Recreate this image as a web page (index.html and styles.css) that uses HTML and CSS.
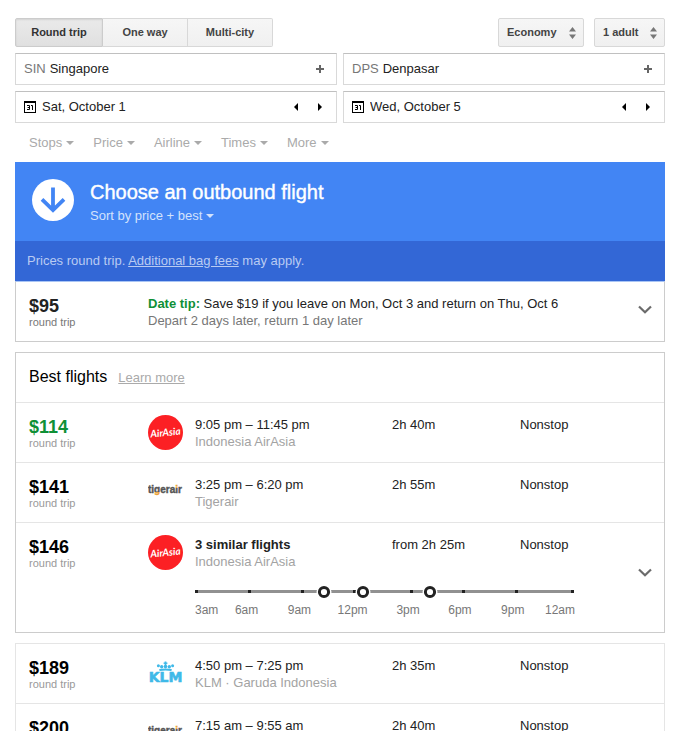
FILE: index.html
```html
<!DOCTYPE html>
<html lang="en">
<head>
  <meta charset="UTF-8" />
  <meta name="viewport" content="width=device-width, initial-scale=1" />
  <title>Flights from Singapore to Denpasar</title>
  <link rel="stylesheet" href="styles.css">
</head>
<body>
  <!-- Shared icons and the Tigerair colours -->
  <svg class="sprites" aria-hidden="true">
    <defs>
      <linearGradient id="tiger-g" gradientUnits="userSpaceOnUse" x1="0" y1="0" x2="0" y2="35">
        <stop offset="0.5" stop-color="#555" />
        <stop offset="0.5" stop-color="#e9a13b" />
      </linearGradient>
      <linearGradient id="tiger-i" gradientUnits="userSpaceOnUse" x1="0" y1="0" x2="0" y2="35">
        <stop offset="0.36" stop-color="#e9a13b" />
        <stop offset="0.36" stop-color="#555" />
      </linearGradient>
    </defs>
    <symbol id="chevron" viewBox="0 0 14 9">
      <path d="M1 1.5L7 7.3L13 1.5" fill="none" stroke="#6b6b6b" stroke-width="2.2" />
    </symbol>
    <symbol id="calendar" viewBox="0 0 12 12">
      <path d="M0 0H12V12H0ZM1 2V11H11V2Z" fill="#000" fill-rule="evenodd" />
      <path d="M3 4.5H5.5V8.5H3M3.6 6.5H5.5M7 4.5H8.5V9" fill="none" stroke="#000" />
    </symbol>
    <symbol id="updown" viewBox="0 0 7 12">
      <path d="M0 4.5L3.5 0L7 4.5ZM0 7.5L3.5 12L7 7.5Z" fill="#777" />
    </symbol>
    <symbol id="plus" viewBox="0 0 8 8">
      <path d="M4 0V8M0 4H8" stroke="#666" stroke-width="2" />
    </symbol>
  </svg>

  <main class="page">
    <!-- Search form -->
    <form class="search">
      <div class="toolbar">
        <div class="trip-types">
          <button type="button" class="trip-type selected">Round trip</button>
          <button type="button" class="trip-type">One way</button>
          <button type="button" class="trip-type">Multi-city</button>
        </div>
        <div class="options">
          <div class="dropdown cabin">
            <select aria-label="Cabin class">
              <option>Economy</option>
              <option>Business</option>
            </select>
            <svg><use href="#updown" /></svg>
          </div>
          <div class="dropdown passengers">
            <select aria-label="Passengers">
              <option>1 adult</option>
              <option>2 adults</option>
            </select>
            <svg><use href="#updown" /></svg>
          </div>
        </div>
      </div>

      <div class="fields">
        <div class="field">
          <label for="from">SIN</label>
          <input type="text" id="from" value="Singapore" />
          <button type="button" class="field-btn" aria-label="Add origin"><svg class="plus"><use href="#plus" /></svg></button>
        </div>
        <div class="field">
          <label for="to">DPS</label>
          <input type="text" id="to" value="Denpasar" />
          <button type="button" class="field-btn" aria-label="Add destination"><svg class="plus"><use href="#plus" /></svg></button>
        </div>
        <div class="field date">
          <label for="depart" aria-label="Departure date"><svg class="calendar"><use href="#calendar" /></svg></label>
          <input type="text" id="depart" value="Sat, October 1" />
          <button type="button" class="field-btn" aria-label="Previous day"><span class="arrow-left"></span></button>
          <button type="button" class="field-btn" aria-label="Next day"><span class="arrow-right"></span></button>
        </div>
        <div class="field date">
          <label for="return" aria-label="Return date"><svg class="calendar"><use href="#calendar" /></svg></label>
          <input type="text" id="return" value="Wed, October 5" />
          <button type="button" class="field-btn" aria-label="Previous day"><span class="arrow-left"></span></button>
          <button type="button" class="field-btn" aria-label="Next day"><span class="arrow-right"></span></button>
        </div>
      </div>

      <div class="filters">
        <button type="button" class="menu-btn">Stops</button>
        <button type="button" class="menu-btn">Price</button>
        <button type="button" class="menu-btn">Airline</button>
        <button type="button" class="menu-btn">Times</button>
        <button type="button" class="menu-btn">More</button>
      </div>
    </form>

    <!-- Blue heading -->
    <header class="banner">
      <svg class="banner-icon" viewBox="0 0 42 42" aria-hidden="true">
        <circle cx="21" cy="21" r="21" fill="#fff" />
        <path d="M21 8.5V31M10 20.3L21 31L32 20.3" fill="none" stroke="#4285f4" stroke-width="3.8" />
      </svg>
      <div>
        <h1>Choose an outbound flight</h1>
        <button type="button" class="menu-btn sort">Sort by price + best</button>
      </div>
    </header>
    <p class="notice">Prices round trip. <a href="#">Additional bag fees</a> may apply.</p>

    <!-- Date tip -->
    <section class="card tip">
      <div class="row">
        <div class="price"><strong>$95</strong><span>round trip</span></div>
        <div class="tip-text">
          <div><b>Date tip:</b> Save $19 if you leave on Mon, Oct 3 and return on Thu, Oct 6</div>
          <div class="sub">Depart 2 days later, return 1 day later</div>
        </div>
        <button type="button" class="expand" aria-label="Show details"><svg><use href="#chevron" /></svg></button>
      </div>
    </section>

    <!-- Best flights -->
    <section class="card best">
      <div class="card-title">
        <h2>Best flights</h2>
        <a href="#">Learn more</a>
      </div>
      <div class="row">
        <div class="price cheap"><strong>$114</strong><span>round trip</span></div>
        <svg class="logo" viewBox="0 0 35 35" role="img" aria-label="AirAsia">
          <circle cx="17.5" cy="17.5" r="17.5" fill="#fc2024" />
          <text class="airasia-text" x="17.5" y="21" text-anchor="middle" transform="rotate(-6 17.5 17.5)">AirAsia</text>
        </svg>
        <div class="info"><div>9:05 pm – 11:45 pm</div><div class="sub">Indonesia AirAsia</div></div>
        <div class="info">2h 40m</div>
        <div class="info">Nonstop</div>
      </div>
      <div class="row">
        <div class="price"><strong>$141</strong><span>round trip</span></div>
        <svg class="logo" viewBox="0 0 35 35" role="img" aria-label="Tigerair">
          <text class="tiger-text" x="0" y="18">ti<tspan class="tiger-g">g</tspan>era<tspan class="tiger-i">i</tspan>r</text>
        </svg>
        <div class="info"><div>3:25 pm – 6:20 pm</div><div class="sub">Tigerair</div></div>
        <div class="info">2h 55m</div>
        <div class="info">Nonstop</div>
      </div>
      <div class="row">
        <div class="price"><strong>$146</strong><span>round trip</span></div>
        <svg class="logo" viewBox="0 0 35 35" role="img" aria-label="AirAsia">
          <circle cx="17.5" cy="17.5" r="17.5" fill="#fc2024" />
          <text class="airasia-text" x="17.5" y="21" text-anchor="middle" transform="rotate(-6 17.5 17.5)">AirAsia</text>
        </svg>
        <div class="info"><div><b>3 similar flights</b></div><div class="sub">Indonesia AirAsia</div></div>
        <div class="info">from 2h 25m</div>
        <div class="info">Nonstop</div>
        <button type="button" class="expand" aria-label="Show similar flights"><svg><use href="#chevron" /></svg></button>
        <div class="timeline">
          <svg viewBox="0 0 380 14" aria-hidden="true">
            <path d="M0 6.5H379" stroke="#919191" stroke-width="3" />
            <path d="M0 6.5h3M53 6.5h3M106 6.5h3M158 6.5h3M215 6.5h3M267 6.5h3M320 6.5h3M376 6.5h3" stroke="#222" stroke-width="3" />
            <g fill="#fff" stroke="#fff" stroke-width="5">
              <circle cx="129" cy="7" r="5" />
              <circle cx="168" cy="7" r="5" />
              <circle cx="235" cy="7" r="5" />
            </g>
            <g fill="#fff" stroke="#222" stroke-width="3">
              <circle cx="129" cy="7" r="4.6" />
              <circle cx="168" cy="7" r="4.6" />
              <circle cx="235" cy="7" r="4.6" />
            </g>
          </svg>
          <div class="hours">
            <span>3am</span><span>6am</span><span>9am</span><span>12pm</span>
            <span>3pm</span><span>6pm</span><span>9pm</span><span>12am</span>
          </div>
        </div>
      </div>
    </section>

    <!-- Other flights -->
    <section class="card others">
      <div class="row">
        <div class="price"><strong>$189</strong><span>round trip</span></div>
        <svg class="logo" viewBox="0 0 35 35" role="img" aria-label="KLM">
          <g fill="#3fb9e8">
            <rect x="16.6" y="5.5" width="1.8" height="4" />
            <rect x="15.6" y="6.5" width="3.8" height="1.4" />
            <circle cx="17.5" cy="10.6" r="1.8" />
            <circle cx="13.7" cy="10.8" r="1.7" />
            <circle cx="21.3" cy="10.8" r="1.7" />
            <circle cx="10.4" cy="9.8" r="1.5" />
            <circle cx="24.6" cy="9.8" r="1.5" />
            <path d="M11.2 13Q17.5 12 23.8 13L23.4 15Q17.5 14.2 11.6 15Z" />
            <text class="klm-text" x="17.5" y="26" text-anchor="middle">KLM</text>
          </g>
        </svg>
        <div class="info"><div>4:50 pm – 7:25 pm</div><div class="sub">KLM · Garuda Indonesia</div></div>
        <div class="info">2h 35m</div>
        <div class="info">Nonstop</div>
      </div>
      <div class="row">
        <div class="price"><strong>$200</strong><span>round trip</span></div>
        <svg class="logo" viewBox="0 0 35 35" role="img" aria-label="Tigerair">
          <text class="tiger-text" x="0" y="18">ti<tspan class="tiger-g">g</tspan>era<tspan class="tiger-i">i</tspan>r</text>
        </svg>
        <div class="info"><div>7:15 am – 9:55 am</div><div class="sub">Tigerair</div></div>
        <div class="info">2h 40m</div>
        <div class="info">Nonstop</div>
      </div>
    </section>
  </main>
</body>
</html>
```
FILE: styles.css
```css
* {
  box-sizing: border-box;
}

body {
  margin: 0;
  background: #fff;
  color: #222;
  font-family: "Liberation Sans", Arial, sans-serif;
  font-size: 13px;
  line-height: 17px;
}

button,
input,
select {
  margin: 0;
  padding: 0;
  border: none;
  background: none;
  color: inherit;
  font: inherit;
}

button {
  cursor: pointer;
}

h1,
h2,
p {
  margin: 0;
  font-weight: normal;
}

.sprites {
  position: absolute;
  width: 0;
  height: 0;
}

.page {
  padding: 18px 17px 0 15px;
}

/* Toolbar */
.toolbar {
  display: flex;
  justify-content: space-between;
  margin-bottom: 6px;
}

.trip-types,
.options {
  display: flex;
}

.options {
  gap: 10px;
}

.trip-type,
.dropdown select {
  height: 29px;
  border: 1px solid #d8d8d8;
  background: linear-gradient(#f6f6f6, #f0f0f0);
  color: #444;
  font-size: 11px;
  font-weight: bold;
}

.trip-type {
  width: 85px;
  border-left-width: 0;
}

.trip-type:last-child {
  border-radius: 0 2px 2px 0;
}

.trip-type.selected {
  width: 88px;
  border: 1px solid #ccc;
  border-radius: 2px 0 0 2px;
  background: linear-gradient(#eaeaea, #e0e0e0);
  box-shadow: inset 0 1px 2px rgba(0, 0, 0, 0.1);
  color: #333;
}

.dropdown {
  position: relative;
}

.dropdown select {
  width: 100%;
  padding-left: 8px;
  border-radius: 2px;
  appearance: none;
}

.dropdown svg {
  position: absolute;
  top: 9px;
  right: 8px;
  width: 7px;
  height: 12px;
  pointer-events: none;
}

.cabin {
  width: 86px;
}

.passengers {
  width: 71px;
}

/* Airports and dates */
.fields {
  display: grid;
  grid-template-columns: 1fr 1fr;
  gap: 6px;
}

.field {
  display: flex;
  align-items: center;
  height: 32px;
  padding: 0 8px 1px;
  border: 1px solid #d9d9d9;
  border-top-color: #c0c0c0;
}

.field label {
  margin-right: 4px;
  color: #777;
}

.field input {
  flex: 1;
  min-width: 0;
  outline: none;
}

.field.date label {
  display: flex;
  margin-right: 6px;
}

.calendar {
  width: 12px;
  height: 12px;
}

.field-btn {
  display: flex;
  align-items: center;
  justify-content: center;
  width: 16px;
  height: 24px;
}

.field-btn + .field-btn {
  margin-left: 8px;
}

.plus {
  width: 8px;
  height: 8px;
}

.arrow-left,
.arrow-right {
  border: 4px solid transparent;
}

.arrow-left {
  border-left-width: 0;
  border-right-color: #000;
}

.arrow-right {
  border-right-width: 0;
  border-left-color: #000;
}

/* Filters */
.filters {
  display: flex;
  gap: 19px;
  padding: 11px 14px;
  color: #aaa;
}

.menu-btn {
  display: flex;
  align-items: center;
}

.menu-btn::after {
  content: "";
  margin-left: 4px;
  border: 4px solid transparent;
  border-top-color: currentColor;
  border-bottom-width: 0;
}

/* Blue heading */
.banner {
  display: flex;
  gap: 16px;
  padding: 17px;
  background: #4285f4;
  color: #fff;
}

.banner-icon {
  width: 42px;
  height: 42px;
}

.banner h1 {
  margin-bottom: 2px;
  font-size: 20px;
  line-height: 26px;
  -webkit-text-stroke: 0.4px #fff;
}

.sort {
  color: #d3e2fc;
}

.notice {
  padding: 11px 12px 12px;
  background: #3367d6;
  color: #b9cbf2;
}

.notice a {
  color: inherit;
}

/* Cards */
.card {
  margin-bottom: 10px;
  border: 1px solid #ccc;
}

.tip {
  border-top-color: #a9c5f5;
}

.others {
  border-color: #e5e5e5;
}

.card-title {
  display: flex;
  align-items: baseline;
  gap: 11px;
  padding: 14px 13px 15px;
}

.card-title h2 {
  color: #000;
  font-size: 16px;
  line-height: 20px;
}

.card-title a {
  color: #aaa;
}

.row {
  display: grid;
  grid-template-columns: 119px 47px 197fr 128fr 118fr 14px;
  padding: 12px 12px 12px 13px;
}

.row + .row,
.card-title + .row {
  border-top: 1px solid #e5e5e5;
}

.price,
.info,
.tip-text {
  padding-top: 1px;
}

.price strong {
  display: block;
  color: #000;
  font-size: 18px;
  line-height: 22px;
}

.price span {
  display: block;
  color: #999;
  font-size: 11px;
  line-height: 10px;
}

.price.cheap strong,
.tip-text b {
  color: #0f9036;
}

.tip .price strong {
  color: #222;
}

.tip .price span,
.tip .sub {
  color: #777;
}

.tip-text {
  grid-column: 2 / 6;
}

.sub {
  color: #a3a3a3;
}

.logo {
  width: 35px;
  height: 35px;
}

.airasia-text {
  fill: #fff;
  font-family: Lato, sans-serif;
  font-size: 10px;
  font-style: italic;
  font-weight: bold;
}

.tiger-text {
  fill: #555;
  stroke: #555;
  stroke-width: 0.4px;
  font-size: 10px;
  font-weight: bold;
}

.tiger-g {
  fill: url(#tiger-g);
  stroke: url(#tiger-g);
}

.tiger-i {
  fill: url(#tiger-i);
  stroke: url(#tiger-i);
}

.klm-text {
  stroke: #3fb9e8;
  stroke-width: 0.6px;
  font-family: "DejaVu Sans", sans-serif;
  font-size: 14px;
  font-weight: bold;
}

.expand {
  display: flex;
  grid-row: 1 / 3;
  grid-column: 6;
  align-items: center;
  padding-bottom: 10px;
}

.tip .expand {
  padding-bottom: 4px;
}

.expand svg {
  width: 14px;
  height: 9px;
}

/* Departure times of the grouped flights */
.timeline {
  grid-row: 2;
  grid-column: 3 / 6;
  max-width: 380px;
  padding-top: 15px;
}

.timeline svg {
  display: block;
  width: 100%;
}

.hours {
  display: grid;
  grid-template-columns: 40fr 53fr 50fr 59fr 52fr 53fr 44fr 30fr;
  padding: 3px 0 1px;
  color: #777;
  font-size: 12px;
  white-space: nowrap;
}
```
